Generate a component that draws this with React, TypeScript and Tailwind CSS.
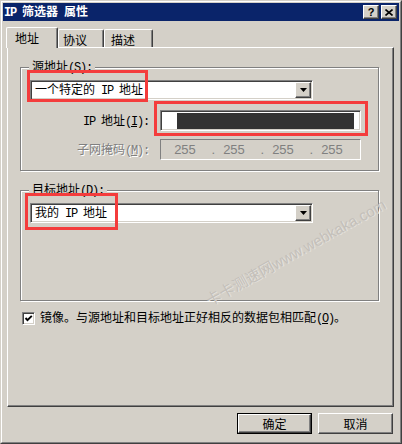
import type { ReactNode } from "react";

const raised =
  "border border-t-white border-l-white border-r-[#404040] border-b-[#404040] shadow-[inset_-1px_-1px_0_#808080]";
const sunken =
  "border border-t-[#808080] border-l-[#808080] border-r-white border-b-white shadow-[inset_1px_1px_0_#404040,inset_-1px_-1px_0_#d4d0c8]";
const etched = "border border-[#808080] shadow-[inset_1px_1px_0_#fff,1px_1px_0_#fff]";

// latin text in the old bitmap font is half-width, Courier is close enough
function M({ children }: { children: ReactNode }) {
  return <span className="whitespace-pre font-['Liberation_Mono',monospace] tracking-[-1.2px]">{children}</span>;
}

function Group({ label, className, children }: { label: ReactNode; className: string; children?: ReactNode }) {
  return (
    <div className={`ml-[12px] flex w-[359px] flex-col ${etched} ${className}`}>
      <div className="-mt-[9px] ml-[8px] w-fit bg-[#d4d0c8] px-[3px] leading-[14px]">{label}</div>
      {children}
    </div>
  );
}

function Combo({ children }: { children: ReactNode }) {
  return (
    <div className={`ml-[9px] mt-[5px] flex h-[20px] w-[283px] items-center bg-white ${sunken}`}>
      <span className="flex-1 whitespace-pre pl-[4px] leading-[14px]">{children}</span>
      <div className={`mr-px flex h-[16px] w-[16px] items-center justify-center bg-[#d4d0c8] ${raised}`}>
        <svg width="7" height="4" viewBox="0 0 7 4">
          <path d="M0 0h7L3.5 4z" fill="#000" />
        </svg>
      </div>
    </div>
  );
}

export default function App() {
  return (
    <div className="relative h-[444px] w-[402px] overflow-hidden font-['Noto_Sans_CJK_SC',sans-serif] text-[12px] text-black">
      <div className="h-full w-full border border-t-[#d4d0c8] border-l-[#d4d0c8] border-r-[#404040] border-b-[#404040] bg-[#d4d0c8]">
        <div className="flex h-full w-full flex-col border border-t-white border-l-white border-r-[#808080] border-b-[#808080] p-px">
          {/* title bar */}
          <div className="flex h-[18px] items-center bg-[#0a246a] pl-[1px] pr-[2px]">
            <span className="flex-1 whitespace-pre font-bold leading-[14px] text-white">
              <M>IP </M>筛选器<M> </M>属性
            </span>
            <div className={`flex h-[14px] w-[16px] items-center justify-center bg-[#d4d0c8] ${raised}`}>
              <span className="font-['Liberation_Sans',sans-serif] text-[11px] font-bold leading-none">?</span>
            </div>
            <div className={`ml-[2px] flex h-[14px] w-[16px] items-center justify-center bg-[#d4d0c8] ${raised}`}>
              <svg width="8" height="7" viewBox="0 0 8 7">
                <path d="M0.5 0.5L7.5 6.5M7.5 0.5L0.5 6.5" stroke="#000" strokeWidth="1.6" />
              </svg>
            </div>
          </div>

          {/* tabs */}
          <div className="ml-[3px] mt-[6px] flex h-[20px] items-end">
            <div className="relative z-10 -mb-px h-[21px] w-[52px] rounded-t-[2px] border-t border-l border-r border-t-white border-l-white border-r-[#404040] bg-[#d4d0c8] pl-[8px] pt-[3px] leading-[14px] shadow-[inset_-1px_0_0_#808080]">
              地址
            </div>
            <div className="h-[18px] w-[46px] rounded-t-[2px] border-t border-l border-r border-t-white border-l-white border-r-[#404040] pl-[4px] pt-[3px] leading-[14px] shadow-[inset_-1px_0_0_#808080]">
              协议
            </div>
            <div className="h-[18px] w-[49px] rounded-t-[2px] border-t border-l border-r border-t-white border-l-white border-r-[#404040] pl-[6px] pt-[3px] leading-[14px] shadow-[inset_-1px_0_0_#808080]">
              描述
            </div>
          </div>

          {/* tab panel */}
          <div className={`ml-[4px] flex h-[360px] w-[387px] flex-col ${raised}`}>
            <Group
              className="mt-[19px] h-[104px]"
              label={
                <>
                  源地址<M>(<u>S</u>):</M>
                </>
              }
            >
              <Combo>
                一个特定的<M> IP </M>地址
              </Combo>
              <div className="mt-[10px] flex items-center">
                <span className="w-[128px] whitespace-pre text-right leading-[14px]">
                  <M>IP </M>地址<M>(<u>I</u>):</M>
                </span>
                <div className={`ml-[11px] flex h-[21px] w-[201px] items-center bg-white ${sunken}`}>
                  <div className="ml-[16px] h-[16px] w-[177px] bg-[#333]" />
                </div>
              </div>
              <div className="mt-[8px] flex items-center">
                <span className="w-[128px] text-right leading-[14px] text-[#808080] [text-shadow:1px_1px_0_#fff]">
                  子网掩码<M>(<u>M</u>):</M>
                </span>
                <div className="ml-[11px] flex h-[21px] w-[201px] items-center border border-t-[#808080] border-l-[#808080] border-r-white border-b-white font-['Liberation_Sans',sans-serif] text-[13px] text-[#808080]">
                  <span className="ml-[6px] w-[36px] text-center">255</span>
                  <span className="w-[13px] pr-[1px] text-right">.</span>
                  <span className="w-[36px] text-center">255</span>
                  <span className="w-[13px] pr-[1px] text-right">.</span>
                  <span className="w-[36px] text-center">255</span>
                  <span className="w-[13px] pr-[1px] text-right">.</span>
                  <span className="w-[36px] text-center">255</span>
                </div>
              </div>
            </Group>

            <Group
              className="mt-[19px] h-[111px]"
              label={
                <>
                  目标地址<M>(<u>D</u>):</M>
                </>
              }
            >
              <Combo>
                我的<M> IP </M>地址
              </Combo>
            </Group>

            <div className="ml-[14px] mt-[9px] flex items-center">
              <div className={`flex h-[13px] w-[13px] items-center justify-center bg-white ${sunken}`}>
                <svg width="9" height="9" viewBox="0 0 9 9">
                  <path d="M1.5 4L3.5 6.2L7.8 1.8" fill="none" stroke="#000" strokeWidth="1.9" />
                </svg>
              </div>
              <span className="ml-[5px] leading-[14px]">
                镜像。与源地址和目标地址正好相反的数据包相匹配<M>(<u>O</u>)</M>。
              </span>
            </div>
          </div>

          {/* dialog buttons */}
          <div className="mt-[6px] flex justify-end gap-[6px] pr-[6px]">
            <div className="h-[21px] w-[75px] border border-black">
              <div className={`flex h-full w-full items-center justify-center bg-[#d4d0c8] leading-[14px] ${raised}`}>
                确定
              </div>
            </div>
            <div className={`flex h-[21px] w-[75px] items-center justify-center bg-[#d4d0c8] leading-[14px] ${raised}`}>
              取消
            </div>
          </div>
        </div>
      </div>

      {/* watermark */}
      <div className="pointer-events-none absolute left-[296px] top-[253px] -translate-x-1/2 -translate-y-1/2 rotate-[-29deg] whitespace-nowrap font-['Liberation_Sans','Noto_Sans_CJK_SC',sans-serif] text-[15px] text-[#c4c0ba] [text-shadow:1px_1px_0_#e4e1dc]">
        卡卡测速网www.webkaka.com
      </div>

      {/* red annotation boxes */}
      <div className="pointer-events-none absolute left-[27px] top-[70px] h-[32px] w-[121px] border-[3px] border-[#f43c3c]" />
      <div className="pointer-events-none absolute left-[154px] top-[101px] h-[35px] w-[214px] border-[3px] border-[#f43c3c]" />
      <div className="pointer-events-none absolute left-[25px] top-[193px] h-[37px] w-[93px] border-[3px] border-[#f43c3c]" />
    </div>
  );
}
